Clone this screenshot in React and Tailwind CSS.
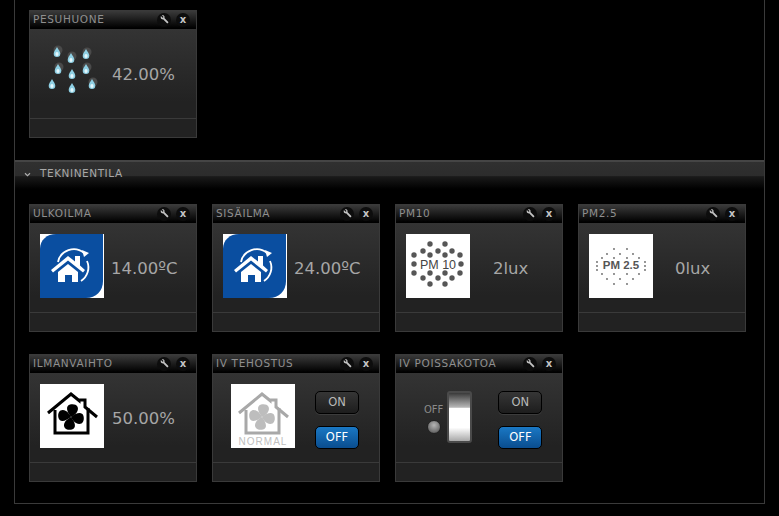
import { Fragment } from "react";

function WrenchIcon() {
  return (
    <svg viewBox="0 0 10 10" className="w-[9px] h-[9px] -scale-x-100">
      <path d="M9 1.2 7.2 3 6.4 2.800 6.200 2 8 .6C6.600 0 5 .8 4.900 2.300c0 .4 0 .7.2 1L1 7.400c-.9 1 .5 2.400 1.500 1.500l4.100-4.100c1.700.6 3.300-1.200 2.400-3.600z" fill="#c4c4c4" />
    </svg>
  );
}

function HeaderButton({ children }) {
  return (
    <div className="w-[14px] h-[14px] rounded-full bg-[#0d0d0d] flex items-center justify-center text-[#c4c4c4] text-[10px] leading-none font-bold">
      {children}
    </div>
  );
}

function Rain() {
  const drops = [
    [17, 13, 1],
    [31, 19, 1],
    [46, 15, 1],
    [18, 30, 1],
    [32, 35, 0],
    [46, 30, 1],
    [12, 45, 0],
    [32, 49, 0],
    [52, 45, 1],
  ];
  return (
    <svg viewBox="0 0 64 64" className="w-[64px] h-[64px]">
      {drops.map(([x, y, halo], i) => (
        <Fragment key={i}>
          {halo ? <circle cx={x + 1} cy={y - 3} r="4.500" fill="#4a4a4a" /> : null}
          <path d={`M${x} ${y - 6}c1.500 2.800 3.300 4.500 3.300 6.800a3.300 3.300 0 0 1-6.600 0c0-2.300 1.800-4 3.300-6.800z`} fill="#8fd0e4" />
          <ellipse cx={x} cy={y + 1} rx="1.600" ry="2" fill="#e4f7fc" />
        </Fragment>
      ))}
    </svg>
  );
}

function HomeBadge() {
  return (
    <div className="w-[64px] h-[64px] bg-white">
      <svg viewBox="0 0 64 64" className="w-full h-full">
        <path d="M0 64V15C0 6 7 0 16 0h47v47c0 10-7 17-17 17z" fill="#0a4ea0" />
        <path d="M18 28A16 16 0 0 1 44 19" stroke="#fff" strokeWidth="1.800" fill="none" />
        <path d="M47 27A16 16 0 0 1 41 47" stroke="#fff" strokeWidth="1.800" fill="none" />
        <path d="M42 16l7 3-5 4z" fill="#fff" />
        <path d="M11 36 28 22l7 5.500V22h5v9.500L45 36l-2 2.500L28 26.500 13 38.500z" fill="#fff" />
        <path d="M18 38 28 30l10 8v10h-6v-7h-7v7h-7z" fill="#fff" />
      </svg>
    </div>
  );
}

function Pm10() {
  const dots = [
    [24, 10], [39, 10],
    [17, 17], [32, 17], [46, 17],
    [8, 21], [24, 21], [39, 21], [54, 21],
    [8, 30], [55, 30],
    [8, 39], [24, 39], [39, 39], [54, 39],
    [17, 44], [32, 44], [46, 44],
    [24, 50], [39, 50],
  ];
  return (
    <div className="w-[64px] h-[64px] bg-white relative flex items-center justify-center">
      <svg viewBox="0 0 64 64" className="absolute inset-0 w-full h-full">
        {dots.map(([x, y], i) => (
          <circle key={i} cx={x} cy={y} r="2.700" fill="#565656" />
        ))}
      </svg>
      <span className="relative text-[12.500px] text-[#444] font-['Liberation_Sans',sans-serif] whitespace-nowrap">PM 10</span>
    </div>
  );
}

function Pm25() {
  const dots = [];
  const rows = [
    [15, [25, 38]],
    [20, [18, 31, 44]],
    [24, [13, 25, 38, 50]],
    [28, [8, 56]],
    [32, [8, 56]],
    [36, [8, 56]],
    [40, [13, 25, 38, 50]],
    [45, [18, 31, 44]],
    [50, [25, 38]],
  ];
  rows.forEach(([y, xs]) => xs.forEach((x) => dots.push([x, y])));
  return (
    <div className="w-[64px] h-[64px] bg-white relative flex items-center justify-center">
      <svg viewBox="0 0 64 64" className="absolute inset-0 w-full h-full">
        {dots.map(([x, y], i) => (
          <circle key={i} cx={x} cy={y} r="0.900" fill="#666" />
        ))}
      </svg>
      <span className="relative text-[11.500px] font-bold text-[#555] font-['Liberation_Sans',sans-serif] whitespace-nowrap">PM 2.5</span>
    </div>
  );
}

function FanHouse({ color, normal, stroke }) {
  const blade = "M31 33C27 28 25 22 30 20.500C36 19 40 23 37 28C36 30 33 32 31 33z";
  return (
    <div className="w-[64px] h-[64px] bg-white relative">
      <svg viewBox="0 0 64 64" className="w-full h-full">
        <path d="M8 29 31 10l8 6.500V16h6v7l12 10" fill="none" stroke={stroke || color} strokeWidth="3" />
        <path d="M15 26v23h33V24" fill="none" stroke={stroke || color} strokeWidth="3" />
        <g fill={color}>
          <path d={blade} />
          <path d={blade} transform="rotate(90 31 33)" />
          <path d={blade} transform="rotate(180 31 33)" />
          <path d={blade} transform="rotate(270 31 33)" />
        </g>
      </svg>
      {normal ? (
        <span className="absolute left-0 right-0 bottom-[1px] text-center text-[10px] leading-[10px] tracking-[1px] text-[#c0c0c0] font-['Liberation_Sans',sans-serif]">NORMAL</span>
      ) : null}
    </div>
  );
}

function Switch() {
  return (
    <div className="flex items-center gap-[4px]">
      <div className="flex flex-col items-center gap-[5px] mt-[4px]">
        <span className="text-[10px] leading-[10px] text-[#8a8a8a]">OFF</span>
        <div className="w-[14px] h-[14px] rounded-full border border-[#222] bg-[radial-gradient(circle_at_50%_35%,#b5b5b5,#6c6c6c_70%,#3a3a3a)]" />
      </div>
      <div className="w-[25px] h-[52px] mb-[2px] rounded-[3px] border-2 border-[#4a4a4a] bg-[linear-gradient(#3a3a3a_0%,#b8b8b8_30%,#ffffff_31%,#ffffff_72%,#a8a8a8_100%)]" />
    </div>
  );
}

function OnOff() {
  return (
    <div className="flex flex-col gap-[12px] mt-[5px]">
      <div className="w-[44px] h-[23px] rounded-[5px] border border-black shadow-[0_1px_0_#3c3c3c] bg-[linear-gradient(#363636,#1d1d1d)] text-[#b8b8b8] text-[11.500px] flex items-center justify-center">ON</div>
      <div className="w-[44px] h-[23px] rounded-[5px] border border-black bg-[linear-gradient(#1a78c4,#0a4d8f)] text-white text-[11.500px] flex items-center justify-center">OFF</div>
    </div>
  );
}

function Card({ title, children }) {
  return (
    <div className="w-[168px] h-[128px] flex flex-col border border-[#3a3a3a] bg-[linear-gradient(#383838,#222222_72%)]">
      <div className="h-[18px] shrink-0 flex items-center justify-between pl-[3px] pr-[6px] bg-[linear-gradient(#3a3a3a,#000000)] border-b border-black">
        <span className="text-[10.500px] text-[#8f8f8f] leading-none tracking-[0.65px]">{title}</span>
        <div className="flex gap-[5px]">
          <HeaderButton><WrenchIcon /></HeaderButton>
          <HeaderButton>x</HeaderButton>
        </div>
      </div>
      <div className="flex-1 flex items-center min-h-0">{children}</div>
      <div className="h-[19px] shrink-0 border-t border-[#3a3a3a] bg-[#222222]" />
    </div>
  );
}

function Value({ children, className }) {
  return <span className={`text-[16.500px] mt-[4px] text-[#a6a6a6] leading-none ${className}`}>{children}</span>;
}

export default function App() {
  return (
    <div className="w-[779px] h-[516px] bg-black overflow-hidden font-['DejaVu_Sans',sans-serif]">
      <div className="ml-[14px] w-[751px] h-[504px] border-x border-b border-[#3a3a3a] flex flex-col">
        <div className="h-[155px] shrink-0 pt-[10px] pl-[14px]">
          <Card title="PESUHUONE">
            <div className="ml-[10px] mb-[4px]"><Rain /></div>
            <Value className="ml-[8px]">42.00%</Value>
          </Card>
        </div>
        <div className="h-[29px] shrink-0 mt-[5px] flex items-center gap-[9px] pl-[9px] pb-[5px] border-t-2 border-[#454545] bg-[linear-gradient(#303030_0%,#2c2c2c_52%,#1a1a1a_54%,#000000_100%)]">
          <svg viewBox="0 0 8 6" className="w-[7px] h-[5px] mt-[2px]">
            <path d="M1 1.500 4 4.500 7 1.500" fill="none" stroke="#b0b0b0" strokeWidth="1.300" />
          </svg>
          <span className="text-[10.500px] text-[#a8a8a8] leading-none tracking-[0.55px]">TEKNINENTILA</span>
        </div>
        <div className="grid grid-cols-[repeat(4,168px)] gap-x-[15px] gap-y-[22px] pl-[14px] pt-[15px]">
          <Card title="ULKOILMA">
            <div className="ml-[10px] mb-[4px]"><HomeBadge /></div>
            <Value className="ml-[7px]">14.00ºC</Value>
          </Card>
          <Card title="SISÄILMA">
            <div className="ml-[10px] mb-[4px]"><HomeBadge /></div>
            <Value className="ml-[7px]">24.00ºC</Value>
          </Card>
          <Card title="PM10">
            <div className="ml-[10px] mb-[4px]"><Pm10 /></div>
            <Value className="ml-[23px]">2lux</Value>
          </Card>
          <Card title="PM2.5">
            <div className="ml-[10px] mb-[4px]"><Pm25 /></div>
            <Value className="ml-[22px]">0lux</Value>
          </Card>
          <Card title="ILMANVAIHTO">
            <div className="ml-[10px] mb-[4px]"><FanHouse color="#000000" /></div>
            <Value className="ml-[8px]">50.00%</Value>
          </Card>
          <Card title="IV TEHOSTUS">
            <div className="ml-[18px] mb-[4px]"><FanHouse color="#bdbdbd" stroke="#a8a8a8" normal /></div>
            <div className="ml-[20px]"><OnOff /></div>
          </Card>
          <Card title="IV POISSAKOTOA">
            <div className="ml-[28px]"><Switch /></div>
            <div className="ml-[26px]"><OnOff /></div>
          </Card>
        </div>
      </div>
    </div>
  );
}
